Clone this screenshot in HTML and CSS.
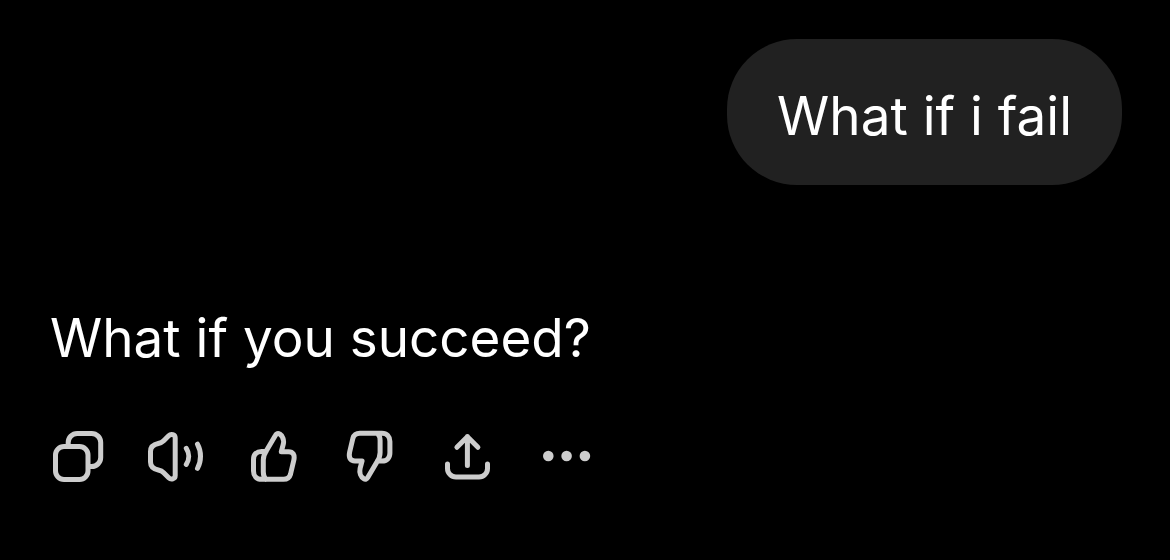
FILE: index.html
```html
<!DOCTYPE html>
<html lang="en">
<head>
<meta charset="utf-8">
<meta name="viewport" content="width=device-width, initial-scale=1">
<title>Chat</title>
<link rel="stylesheet" href="styles.css">
</head>
<body>
<main class="chat">
  <p class="bubble">What if i fail</p>
  <article class="reply">
    <p class="reply-text">What if you succeed?</p>
    <div class="actions">
      <button class="action" type="button" aria-label="Copy">
        <svg class="icon" viewBox="0 0 60 60"><rect x="7.5" y="19.5" width="32.5" height="33" rx="8.5"/><path d="M20.2 18v-2.5a9 9 0 0 1 9-9h14.5a9 9 0 0 1 9 9V30.500a9 9 0 0 1-9 9H41"/></svg>
      </button>
      <button class="action" type="button" aria-label="Read aloud">
        <svg class="icon" viewBox="0 0 60 60"><path d="M29.200 11c0-3.500-4.200-4.500-6.500-2.200l-5 5c-1.800 1.800-3.200 2.200-5.400 2.700C7 17.600 4.500 20 4.500 24.500v10.500c0 4.500 2.500 6.900 7.800 8 2.200.5 3.600.9 5.400 2.700l5 5c2.300 2.300 6.500 1.300 6.500-2.200zM40.300 21.300c3.200 4.800 3.200 11.200 0 16M51.500 17.200c4 7.200 4 17 0 24.200"/></svg>
      </button>
      <button class="action" type="button" aria-label="Good response">
        <svg class="icon" viewBox="0 0 60 60"><path d="M22 24.500h-4.500c-5 0-8 3-8 8v11.500c0 5 3 8.300 8 8.300h22c4 0 6-1.500 7-5l3.300-14c1.200-5.500-.8-8.600-5.300-8.600h-7.200l2-7.500c1-4.500-.8-8.500-3.600-10.200-1.700-1.100-3.200-.5-4.200 1.300L22.500 23.500c-2.200 3.200-3.200 6-3.200 9.500v12c0 3 .5 5 2.500 7.300"/></svg>
      </button>
      <button class="action" type="button" aria-label="Bad response">
        <svg class="icon" viewBox="0 0 60 60"><path transform="rotate(180 28.700 29.300)" d="M22 24.500h-4.500c-5 0-8 3-8 8v11.500c0 5 3 8.300 8 8.300h22c4 0 6-1.500 7-5l3.300-14c1.200-5.500-.8-8.600-5.300-8.600h-7.200l2-7.500c1-4.500-.8-8.500-3.600-10.200-1.700-1.100-3.200-.5-4.200 1.300L22.500 23.500c-2.200 3.200-3.200 6-3.200 9.500v12c0 3 .5 5 2.500 7.300"/></svg>
      </button>
      <button class="action" type="button" aria-label="Share">
        <svg class="icon" viewBox="0 0 60 60"><path d="M27.400 38.500V9.500M16.900 20.300L27.400 9.800l10.500 10.500M7.500 37v4.500a8.500 8.500 0 0 0 8.500 8.500h23a8.500 8.500 0 0 0 8.500-8.500V37"/></svg>
      </button>
      <button class="action" type="button" aria-label="More">
        <svg class="icon icon-dots" viewBox="0 0 60 60"><circle cx="10.300" cy="29" r="5.300"/><circle cx="28.600" cy="29" r="5.300"/><circle cx="46.900" cy="29" r="5.300"/></svg>
      </button>
    </div>
  </article>
</main>
</body>
</html>
```
FILE: styles.css
```css
body {
  margin: 0;
  background: #000;
  color: #fff;
  font-family: Inter, "Liberation Sans", sans-serif;
  font-size: 53px;
  line-height: 70px;
}

.chat {
  display: flex;
  flex-direction: column;
  gap: 118px;
  padding: 39px 48px;
}

.bubble {
  align-self: flex-end;
  margin: 0;
  padding: 42px 50px 34px;
  border-radius: 70px;
  background: #212121;
}

.reply {
  display: flex;
  flex-direction: column;
  gap: 54px;
}

.reply-text {
  margin: 0;
  padding-left: 2px;
}

.actions {
  display: flex;
  flex-wrap: wrap;
  gap: 38px;
}

.action {
  width: 60px;
  height: 60px;
  padding: 0;
  border: 0;
  background: none;
  color: #cdcdcd;
  cursor: pointer;
}

.icon {
  display: block;
  width: 100%;
  height: 100%;
  fill: none;
  stroke: currentColor;
  stroke-width: 5;
  stroke-linecap: round;
  stroke-linejoin: round;
}

.icon-dots {
  fill: currentColor;
  stroke: none;
}
```
